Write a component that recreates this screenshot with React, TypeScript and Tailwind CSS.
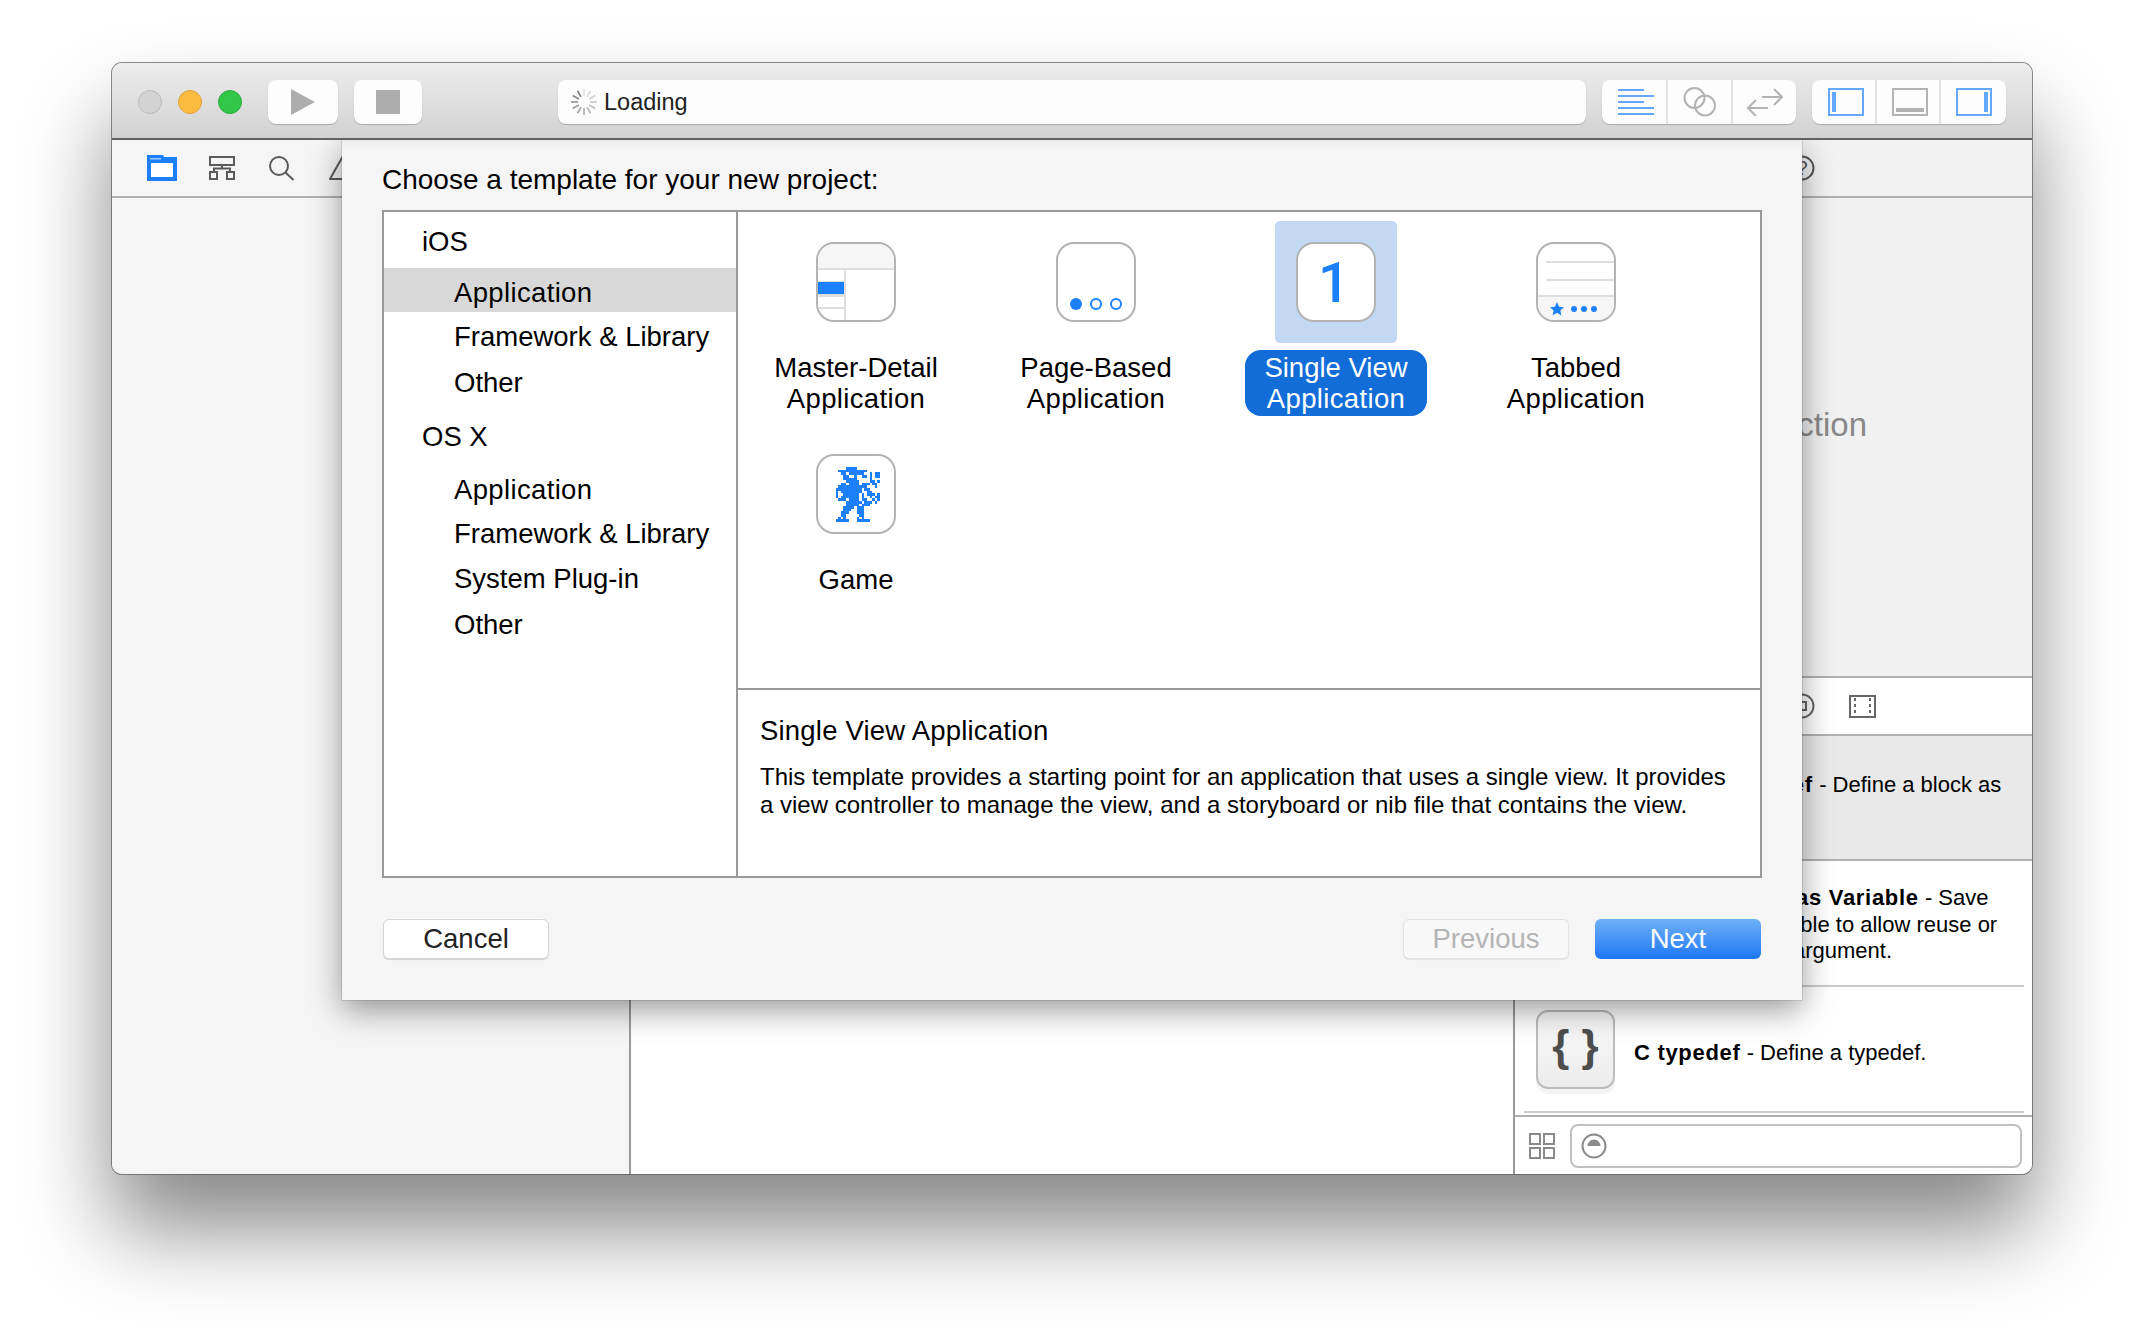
import React from 'react';

const sprite = [
  '.....####.........',
  '..###########.....',
  '...##.######..#.##',
  '....##..#..##.#.##',
  '....#####.....#...',
  '.....#####....##.#',
  '...##.####.###.##.',
  '..###########...#.',
  '.##########.##....',
  '.#.########..##...',
  '.#..######.#.###.#',
  '.#.#######.#..#.##',
  '..###.####.##..#.#',
  '.....######.###.#.',
  '.....#####.###....',
  '....####.###......',
  '....###..###......',
  '...###...###......',
  '...##.....##......',
  '..#.#....#.#......',
  '.#####...#####....',
];

const sidebar = [
  { label: 'iOS', className: 'h-[56px] pl-[38px] pt-[3px]' },
  { label: 'Application', className: 'h-[44px] pl-[70px] pt-[6px] bg-[#d8d8d8] tracking-[0.35px]' },
  { label: 'Framework & Library', className: 'h-[46px] pl-[70px] pt-[3px]' },
  { label: 'Other', className: 'h-[48px] pl-[70px] pt-[1px]' },
  { label: 'OS X', className: 'h-[60px] pl-[38px] pt-[1px]' },
  { label: 'Application', className: 'h-[46px] pl-[70px] pt-[1px] tracking-[0.35px]' },
  { label: 'Framework & Library', className: 'h-[44px] pl-[70px]' },
  { label: 'System Plug-in', className: 'h-[44px] pl-[70px] pt-[1px]' },
  { label: 'Other', className: 'h-[48px] pl-[70px] pt-[1px]' },
];

const Spinner = () => (
  <svg width="28" height="28" viewBox="0 0 28 28">
    {Array.from({ length: 12 }).map((_, i) => (
      <line
        key={i}
        x1="14"
        y1="1"
        x2="14"
        y2="8"
        stroke="#777"
        strokeWidth="1.6"
        opacity={0.2 + (i / 12) * 0.8}
        transform={`rotate(${i * 30} 14 14)`}
      />
    ))}
  </svg>
);

const MasterIcon = () => (
  <div className="relative w-[80px] h-[80px] rounded-[18px] border-2 border-[#b3b3b3] bg-white overflow-hidden">
    <div className="h-[26px] bg-[#f6f6f6] border-b-2 border-[#dedede]" />
    <div className="absolute left-[26px] top-[26px] bottom-0 w-[2px] bg-[#dedede]" />
    <div className="absolute left-0 top-[37px] w-[26px] h-[16px] bg-[#dedede]" />
    <div className="absolute left-0 top-[38px] w-[26px] h-[12px] bg-[#1c80fc]" />
    <div className="absolute left-0 top-[63px] w-[26px] h-[2px] bg-[#dedede]" />
  </div>
);

const PageIcon = () => (
  <div className="w-[80px] h-[80px] rounded-[18px] border-2 border-[#b3b3b3] bg-white flex items-end justify-center gap-[8px] pb-[10px]">
    <div className="w-[12px] h-[12px] rounded-full bg-[#1c80fc]" />
    <div className="w-[12px] h-[12px] rounded-full border-2 border-[#1c80fc]" />
    <div className="w-[12px] h-[12px] rounded-full border-2 border-[#1c80fc]" />
  </div>
);

const SingleIcon = () => (
  <div className="w-[80px] h-[80px] rounded-[18px] border-2 border-[#b3b3b3] bg-white flex items-center justify-center pr-[4px] pt-[2px] font-['Roboto',sans-serif] font-medium text-[56px] leading-none text-[#1c80fc]">
    1
  </div>
);

const TabbedIcon = () => (
  <div className="relative w-[80px] h-[80px] rounded-[18px] border-2 border-[#b3b3b3] bg-white overflow-hidden">
    <div className="absolute left-[8px] right-0 top-[17px] h-[2px] bg-[#dedede]" />
    <div className="absolute left-[8px] right-0 top-[35px] h-[2px] bg-[#dedede]" />
    <div className="absolute left-0 right-0 bottom-0 h-[25px] bg-[#f6f6f6] border-t-2 border-[#dedede] flex items-center pl-[12px]">
      <svg width="14" height="14" viewBox="0 0 24 24" fill="#1c80fc">
        <path d="M12 0l3.6 8 8.4.9-6.3 5.7 1.8 8.4-7.5-4.4L4.500 23l1.800-8.400L0 8.900 8.400 8z" />
      </svg>
      <div className="ml-[7px] flex gap-[4px]">
        <div className="w-[6px] h-[6px] rounded-full bg-[#1c80fc]" />
        <div className="w-[6px] h-[6px] rounded-full bg-[#1c80fc]" />
        <div className="w-[6px] h-[6px] rounded-full bg-[#1c80fc]" />
      </div>
    </div>
  </div>
);

const GameIcon = () => (
  <div className="w-[80px] h-[80px] rounded-[18px] border-2 border-[#b3b3b3] bg-white flex items-center justify-center">
    <svg width="47" height="55" viewBox="0 0 18 21" shapeRendering="crispEdges" fill="#1c80fc">
      {sprite.map((row, y) =>
        row.split('').map((c, x) => (c === '#' ? <rect key={`${x}-${y}`} x={x} y={y} width="1" height="1" /> : null))
      )}
    </svg>
  </div>
);

const Template = ({
  icon,
  lines,
  selected,
}: {
  icon: React.ReactNode;
  lines: string[];
  selected?: boolean;
}) => (
  <div className="flex flex-col items-center h-[212px] pt-[9px]">
    <div
      className={`w-[122px] h-[122px] rounded-[5px] flex items-center justify-center ${
        selected ? 'bg-[#c2d8f3]' : ''
      }`}
    >
      {icon}
    </div>
    <div
      className={`mt-[7px] px-[19px] py-[2px] rounded-[16px] text-center text-[27.5px] leading-[31px] ${
        selected ? 'bg-[#126dd8] text-white' : 'text-black'
      }`}
    >
      {lines.map((l) => (
        <div key={l} className={l === 'Application' ? 'tracking-[0.35px]' : ''}>
          {l}
        </div>
      ))}
    </div>
  </div>
);

const Segmented = ({ children }: { children: React.ReactNode }) => (
  <div className="flex h-[44px] w-[194px] rounded-[8px] bg-[#fdfdfd] shadow-[0_1px_1px_rgba(0,0,0,0.2)] divide-x-2 divide-[#e2e2e2]">
    {children}
  </div>
);

const SnippetIcon = () => (
  <div className="w-[79px] h-[79px] shrink-0 rounded-[12px] border-2 border-[#bcbcbc] bg-linear-to-b from-[#fafafa] to-[#ececec] shadow-[0_5px_0_#f4f4f4] flex items-center justify-center text-[44px] leading-none font-bold text-[#4d4d4d] pb-[6px]">
    {'{ }'}
  </div>
);

const Modal = () => (
  <div className="absolute left-[230px] top-[77px] z-10 w-[1460px] h-[860px] pl-[40px] pr-[40px] bg-[linear-gradient(#ededed,#f5f5f5_12px)] shadow-[0_10px_30px_rgba(0,0,0,0.4),0_0_1px_rgba(0,0,0,0.6)]">
    <div className="h-[70px] pt-[24px] text-[28px] leading-[32px] text-black">Choose a template for your new project:</div>
    <div className="flex h-[668px] border-2 border-[#9a9a9a] bg-white">
      <div className="w-[354px] border-r-2 border-[#9a9a9a] text-[27.5px] text-black">
        {sidebar.map((s, i) => (
          <div key={i} className={`flex items-center ${s.className}`}>
            {s.label}
          </div>
        ))}
      </div>
      <div className="flex-1 flex flex-col">
        <div className="h-[478px] border-b-2 border-[#9a9a9a] -ml-[2px] grid grid-cols-[240px_240px_240px_240px] content-start">
          <Template icon={<MasterIcon />} lines={['Master-Detail', 'Application']} />
          <Template icon={<PageIcon />} lines={['Page-Based', 'Application']} />
          <Template icon={<SingleIcon />} lines={['Single View', 'Application']} selected />
          <Template icon={<TabbedIcon />} lines={['Tabbed', 'Application']} />
          <Template icon={<GameIcon />} lines={['Game']} />
        </div>
        <div className="pl-[22px] pt-[24px]">
          <div className="text-[27.5px] leading-[34px] tracking-[0.2px] text-black">Single View Application</div>
          <div className="mt-[15px] text-[24px] leading-[28.3px] text-black">
            This template provides a starting point for an application that uses a single view. It provides
            <br />
            a view controller to manage the view, and a storyboard or nib file that contains the view.
          </div>
        </div>
      </div>
    </div>
    <div className="mt-[41px] mr-[1px] flex text-[27.5px]">
      <div className="w-[166px] h-[40px] ml-[1px] rounded-[6px] bg-white border border-[#d6d6d6] shadow-[0_1px_1px_rgba(0,0,0,0.15)] flex items-center justify-center text-[#222]">
        Cancel
      </div>
      <div className="ml-auto w-[166px] h-[40px] rounded-[6px] bg-[#f8f8f8] border border-[#e2e2e2] shadow-[0_1px_1px_rgba(0,0,0,0.08)] flex items-center justify-center text-[#b4b4b4]">
        Previous
      </div>
      <div className="ml-[26px] w-[166px] h-[40px] rounded-[6px] bg-linear-to-b from-[#6eb0f7] to-[#1a76f5] flex items-center justify-center text-white">
        Next
      </div>
    </div>
  </div>
);

const App = () => {
  return (
    <div className="w-[2144px] h-[1334px] bg-white pl-[112px] pt-[63px] font-['Liberation_Sans',sans-serif]">
      <div className="relative w-[1920px] h-[1111px] flex flex-col rounded-[10px] shadow-[0_0_0_1px_rgba(90,90,90,0.7),0_55px_87px_rgba(0,0,0,0.47)]">
        {/* Title bar */}
        <div className="relative z-20 h-[77px] shrink-0 rounded-t-[10px] bg-linear-to-b from-[#ededed] to-[#d2d2d2] border-b-2 border-[#616161] flex items-start pt-[17px]">
          <div className="ml-[26px] mt-[10px] w-[24px] h-[24px] rounded-full bg-[#d3d3d3] border border-[#b9b9b9]" />
          <div className="ml-[16px] mt-[10px] w-[24px] h-[24px] rounded-full bg-[#fdbc40] border border-[#e0a33a]" />
          <div className="ml-[16px] mt-[10px] w-[24px] h-[24px] rounded-full bg-[#33c748] border border-[#2aac3c]" />
          <div className="ml-[26px] w-[70px] h-[44px] rounded-[8px] bg-[#fdfdfd] shadow-[0_1px_1px_rgba(0,0,0,0.2)] flex items-center justify-center">
            <svg width="24" height="26" viewBox="0 0 24 26">
              <path d="M0 0L24 13L0 26Z" fill="#adadad" />
            </svg>
          </div>
          <div className="ml-[16px] w-[68px] h-[44px] rounded-[8px] bg-[#fdfdfd] shadow-[0_1px_1px_rgba(0,0,0,0.2)] flex items-center justify-center">
            <div className="w-[24px] h-[24px] bg-[#adadad]" />
          </div>
          <div className="ml-[136px] w-[1028px] h-[44px] rounded-[8px] bg-[#fdfdfd] shadow-[0_1px_1px_rgba(0,0,0,0.2)] flex items-center pl-[12px] text-[23.5px] text-[#222]">
            <Spinner />
            <span className="ml-[6px] pt-[2px]">Loading</span>
          </div>
          <div className="ml-[16px]">
            <Segmented>
              <div className="w-[66px] pl-[3px] flex items-center justify-center">
                <svg width="36" height="26" viewBox="0 0 36 26" stroke="#63a8fc" strokeWidth="2">
                  <path d="M0 1H26M0 7H36M0 13H26M0 19H36M0 25H36" />
                </svg>
              </div>
              <div className="w-[65px] flex items-center justify-center">
                <svg width="34" height="30" viewBox="0 0 34 30" fill="none" stroke="#b3b3b3" strokeWidth="2">
                  <circle cx="11.500" cy="11" r="10" />
                  <circle cx="22" cy="18.500" r="10" />
                </svg>
              </div>
              <div className="flex-1 flex items-center justify-center">
                <svg width="38" height="28" viewBox="0 0 38 28" fill="none" stroke="#b3b3b3" strokeWidth="2">
                  <path d="M16 9H36M28 1L36 9L28 17M22 20H2M10 12L2 20L10 28" />
                </svg>
              </div>
            </Segmented>
          </div>
          <div className="ml-[16px]">
            <Segmented>
              <div className="w-[65px] pl-[4px] flex items-center justify-center">
                <svg width="36" height="28" viewBox="0 0 36 28">
                  <rect x="1" y="1" width="34" height="26" fill="none" stroke="#63a8fc" strokeWidth="2" />
                  <rect x="4" y="4" width="4" height="20" fill="#63a8fc" />
                </svg>
              </div>
              <div className="w-[64px] pl-[3px] flex items-center justify-center">
                <svg width="36" height="28" viewBox="0 0 36 28">
                  <rect x="1" y="1" width="34" height="26" fill="none" stroke="#b3b3b3" strokeWidth="2" />
                  <rect x="4" y="20" width="28" height="4" fill="#b3b3b3" />
                </svg>
              </div>
              <div className="flex-1 flex items-center justify-center">
                <svg width="36" height="28" viewBox="0 0 36 28">
                  <rect x="1" y="1" width="34" height="26" fill="none" stroke="#63a8fc" strokeWidth="2" />
                  <rect x="28" y="4" width="4" height="20" fill="#63a8fc" />
                </svg>
              </div>
            </Segmented>
          </div>
        </div>

        {/* Main columns */}
        <div className="flex-1 flex min-h-0 rounded-b-[10px] overflow-hidden">
          {/* Navigator */}
          <div className="w-[519px] shrink-0 bg-[#f5f5f5] border-r-2 border-[#999]">
            <div className="h-[58px] border-b-2 border-[#b0b0b0] flex items-center pl-[35px] pb-[1px]">
              <svg width="30" height="26" viewBox="0 0 30 26">
                <path d="M0 0H16L17 2H30V26H0Z" fill="#1c80fc" />
                <rect x="4" y="8" width="22" height="14" fill="#fff" />
                <rect x="3" y="3" width="11" height="1.500" fill="#9cc6fd" />
              </svg>
              <svg className="ml-[32px]" width="26" height="24" viewBox="0 0 26 24" fill="none" stroke="#5a5a5a" strokeWidth="2">
                <rect x="1" y="1" width="24" height="8" />
                <path d="M5 16V12.500H21V16M13 9V12.500" />
                <rect x="1" y="16" width="7" height="7" />
                <rect x="18" y="16" width="7" height="7" />
              </svg>
              <svg className="ml-[34px]" width="26" height="26" viewBox="0 0 26 26" fill="none" stroke="#5a5a5a" strokeWidth="2">
                <circle cx="10" cy="11" r="9" />
                <path d="M16.500 17.500L24.500 25" />
              </svg>
              <svg className="ml-[34px]" width="28" height="26" viewBox="0 0 28 26" fill="none" stroke="#5a5a5a" strokeWidth="2">
                <path d="M14 1L27 24H1Z" strokeLinejoin="round" />
              </svg>
            </div>
          </div>

          {/* Editor */}
          <div className="flex-1 bg-white" />

          {/* Inspector */}
          <div className="w-[519px] shrink-0 flex flex-col border-l-2 border-[#999] bg-white">
            <div className="h-[58px] bg-[#f2f2f2] border-b-2 border-[#b0b0b0] flex items-center pl-[274px] pb-[1px]">
              <svg width="26" height="26" viewBox="0 0 26 26" fill="none">
                <circle cx="13" cy="13" r="11.500" stroke="#555" strokeWidth="2" />
                <text x="13" y="20" textAnchor="middle" fontSize="20" fill="#555">?</text>
              </svg>
            </div>
            <div className="h-[480px] bg-[#f1f1f1] border-b-2 border-[#b0b0b0] pt-[207px] text-center text-[33px] leading-[40px] text-[#888]">
              No Selection
            </div>
            <div className="h-[58px] border-b-2 border-[#b0b0b0] flex items-center pl-[274px]">
              <svg width="26" height="26" viewBox="0 0 26 26" fill="none" stroke="#666" strokeWidth="2">
                <circle cx="13" cy="13" r="11.500" />
                <rect x="9" y="9" width="8" height="8" />
              </svg>
              <svg className="ml-[34px]" width="27" height="23" viewBox="0 0 27 23">
                <rect x="1" y="1" width="25" height="21" fill="none" stroke="#666" strokeWidth="2" />
                <path d="M6 3V20M21 3V20" stroke="#666" strokeWidth="2" strokeDasharray="3 3" />
              </svg>
            </div>
            <div className="h-[125px] bg-[#e9e9e9] border-b-2 border-[#b0b0b0] flex items-start pt-[23px] pl-[21px] gap-[19px]">
              <SnippetIcon />
              <div className="pt-[13px] text-[22px] leading-[26.7px] text-black w-[380px]">
                <b className="tracking-[0.85px]">C Block typedef</b> - Define a block as
                <br />a typedef.
              </div>
            </div>
            <div className="relative h-[124px] flex items-start pt-[8px] pl-[21px] gap-[19px]">
              <SnippetIcon />
              <div className="pt-[16px] text-[22px] leading-[26.7px] text-black whitespace-nowrap">
                <b className="tracking-[0.7px]">C Inline Block as Variable</b> - Save
                <br />a block to a variable to allow reuse or
                <br />passing it as an argument.
              </div>
            </div>
            <div className="h-[2px] ml-[9px] mr-[8px] bg-[#cccccc]" />
            <div className="h-[124px] flex items-center pl-[21px] gap-[19px]">
              <SnippetIcon />
              <div className="pt-[6px] text-[22px] text-black">
                <b className="tracking-[0.7px]">C typedef</b> - Define a typedef.
              </div>
            </div>
            <div className="h-[2px] ml-[9px] mr-[8px] bg-[#cccccc]" />
            <div className="mt-[2px] flex-1 border-t-2 border-[#b0b0b0] flex items-center pl-[14px]">
              <svg width="26" height="26" viewBox="0 0 26 26" fill="none" stroke="#8a8a8a" strokeWidth="2">
                <rect x="1" y="1" width="10" height="10" />
                <rect x="15" y="1" width="10" height="10" />
                <rect x="1" y="15" width="10" height="10" />
                <rect x="15" y="15" width="10" height="10" />
              </svg>
              <div className="ml-[15px] w-[452px] h-[44px] rounded-[8px] border-2 border-[#c0c0c0] bg-white flex items-center pl-[9px]">
                <svg width="26" height="26" viewBox="0 0 26 26">
                  <circle cx="13" cy="13" r="11.500" fill="none" stroke="#8a8a8a" strokeWidth="2" />
                  <path d="M6.500 13A6.500 6.500 0 0 1 19.500 13Z" fill="#8a8a8a" />
                </svg>
              </div>
            </div>
          </div>
        </div>

        <Modal />
      </div>
    </div>
  );
};

export default App;
